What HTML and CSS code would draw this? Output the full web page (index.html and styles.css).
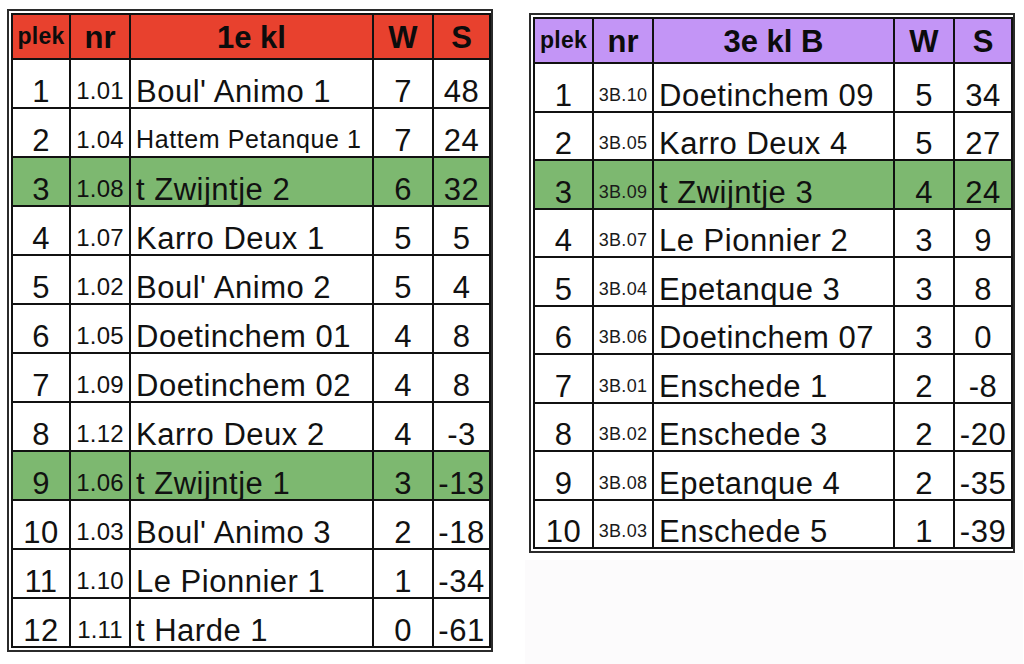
FILE: index.html
```html
<!DOCTYPE html>
<html lang="nl">
<head>
<meta charset="utf-8">
<title>Standen</title>
<link rel="stylesheet" href="styles.css">
</head>
<body>
<div class="page">
  <div class="frame frame-left">
    <table class="standings standings-left">
      <colgroup><col class="c-plek"><col class="c-nr"><col class="c-name"><col class="c-w"><col class="c-s"></colgroup>
      <thead>
        <tr class="head head-red"><th class="plek-h">plek</th><th>nr</th><th>1e kl</th><th>W</th><th>S</th></tr>
      </thead>
      <tbody>
        <tr><td class="pos">1</td><td class="nr">1.01</td><td class="name">Boul' Animo 1</td><td class="num">7</td><td class="num">48</td></tr>
        <tr><td class="pos">2</td><td class="nr">1.04</td><td class="name small">Hattem Petanque 1</td><td class="num">7</td><td class="num">24</td></tr>
        <tr class="hl"><td class="pos">3</td><td class="nr">1.08</td><td class="name">t Zwijntje 2</td><td class="num">6</td><td class="num">32</td></tr>
        <tr><td class="pos">4</td><td class="nr">1.07</td><td class="name">Karro Deux 1</td><td class="num">5</td><td class="num">5</td></tr>
        <tr><td class="pos">5</td><td class="nr">1.02</td><td class="name">Boul' Animo 2</td><td class="num">5</td><td class="num">4</td></tr>
        <tr><td class="pos">6</td><td class="nr">1.05</td><td class="name">Doetinchem 01</td><td class="num">4</td><td class="num">8</td></tr>
        <tr><td class="pos">7</td><td class="nr">1.09</td><td class="name">Doetinchem 02</td><td class="num">4</td><td class="num">8</td></tr>
        <tr><td class="pos">8</td><td class="nr">1.12</td><td class="name">Karro Deux 2</td><td class="num">4</td><td class="num">-3</td></tr>
        <tr class="hl"><td class="pos">9</td><td class="nr">1.06</td><td class="name">t Zwijntje 1</td><td class="num">3</td><td class="num">-13</td></tr>
        <tr><td class="pos">10</td><td class="nr">1.03</td><td class="name">Boul' Animo 3</td><td class="num">2</td><td class="num">-18</td></tr>
        <tr><td class="pos">11</td><td class="nr">1.10</td><td class="name">Le Pionnier 1</td><td class="num">1</td><td class="num">-34</td></tr>
        <tr><td class="pos">12</td><td class="nr">1.11</td><td class="name">t Harde 1</td><td class="num">0</td><td class="num">-61</td></tr>
      </tbody>
    </table>
  </div>
  <div class="right-col">
    <div class="frame frame-right">
      <table class="standings standings-right">
        <colgroup><col class="c-plek"><col class="c-nr"><col class="c-name-r"><col class="c-w"><col class="c-s"></colgroup>
        <thead>
          <tr class="head head-purple"><th class="plek-h">plek</th><th>nr</th><th>3e kl B</th><th>W</th><th>S</th></tr>
        </thead>
        <tbody>
          <tr><td class="pos">1</td><td class="nr nr-b">3B.10</td><td class="name">Doetinchem 09</td><td class="num">5</td><td class="num">34</td></tr>
          <tr><td class="pos">2</td><td class="nr nr-b">3B.05</td><td class="name">Karro Deux 4</td><td class="num">5</td><td class="num">27</td></tr>
          <tr class="hl"><td class="pos">3</td><td class="nr nr-b">3B.09</td><td class="name">t Zwijntje 3</td><td class="num">4</td><td class="num">24</td></tr>
          <tr><td class="pos">4</td><td class="nr nr-b">3B.07</td><td class="name">Le Pionnier 2</td><td class="num">3</td><td class="num">9</td></tr>
          <tr><td class="pos">5</td><td class="nr nr-b">3B.04</td><td class="name">Epetanque 3</td><td class="num">3</td><td class="num">8</td></tr>
          <tr><td class="pos">6</td><td class="nr nr-b">3B.06</td><td class="name">Doetinchem 07</td><td class="num">3</td><td class="num">0</td></tr>
          <tr><td class="pos">7</td><td class="nr nr-b">3B.01</td><td class="name">Enschede 1</td><td class="num">2</td><td class="num">-8</td></tr>
          <tr><td class="pos">8</td><td class="nr nr-b">3B.02</td><td class="name">Enschede 3</td><td class="num">2</td><td class="num">-20</td></tr>
          <tr><td class="pos">9</td><td class="nr nr-b">3B.08</td><td class="name">Epetanque 4</td><td class="num">2</td><td class="num">-35</td></tr>
          <tr><td class="pos">10</td><td class="nr nr-b">3B.03</td><td class="name">Enschede 5</td><td class="num">1</td><td class="num">-39</td></tr>
        </tbody>
      </table>
    </div>
    <div class="under"></div>
  </div>
</div>
</body>
</html>
```
FILE: styles.css
```css
html, body {
  margin: 0;
  padding: 0;
  background: #ffffff;
}

body {
  font-family: "Liberation Sans", Arial, Helvetica, sans-serif;
  color: #111;
}

.page {
  display: flex;
  align-items: flex-start;
  gap: 36px;
  padding: 9px 7px 0 7px;
  height: 664px;
  box-sizing: border-box;
}

.frame {
  width: 486px;
  box-sizing: border-box;
  border: 2px solid #2b2b2b;
  padding: 2px;
  background: #fff;
}

.right-col {
  display: flex;
  flex-direction: column;
  margin-top: 4px;
}

.under {
  height: 104px;
  margin: 7px -8px 0 -4px;
  background: #fcfbfc;
}

.standings {
  width: 478px;
  border-collapse: collapse;
  table-layout: fixed;
  border: 2px solid #111;
}

.standings th,
.standings td {
  border: 2px solid #111;
  padding: 0;
  vertical-align: bottom;
  white-space: nowrap;
  overflow: hidden;
}

.c-plek { width: 58px; }
.c-nr { width: 60px; }
.c-name { width: 243px; }
.c-name-r { width: 241px; }
.c-w { width: 60px; }
.c-s { width: 57px; }

.standings-right .c-plek { width: 59px; }
.standings-right .c-s { width: 58px; }

.head th {
  height: 38px;
  font-weight: bold;
  font-size: 31px;
  line-height: 34px;
  padding-bottom: 3px;
  text-align: center;
  color: #0c0c0c;
}

.head th.plek-h {
  font-size: 23px;
  letter-spacing: 0.3px;
  padding-bottom: 5px;
}

.head-red th { background: #e8412e; }
.head-purple th { background: #c395f6; }

.standings-left tbody td { height: 46px; }
.standings-right tbody td { height: 46.5px; }

.standings tbody td {
  font-size: 31px;
  line-height: 31px;
  padding-bottom: 0;
  letter-spacing: 0.5px;
}

.pos, .num { text-align: center; }

.name {
  text-align: left;
  padding-left: 5px !important;
}

.name.small {
  font-size: 25px !important;
  letter-spacing: 0.6px !important;
  padding-bottom: 1px !important;
}

.standings tbody td.nr {
  font-size: 24px;
  letter-spacing: 0.2px;
  text-align: center;
  padding-bottom: 1px;
}

.standings tbody td.nr-b {
  font-size: 18px;
  letter-spacing: 0.3px;
  padding-bottom: 0;
  color: #1a1a1a;
}

.hl td { background: #7db870; }
```
